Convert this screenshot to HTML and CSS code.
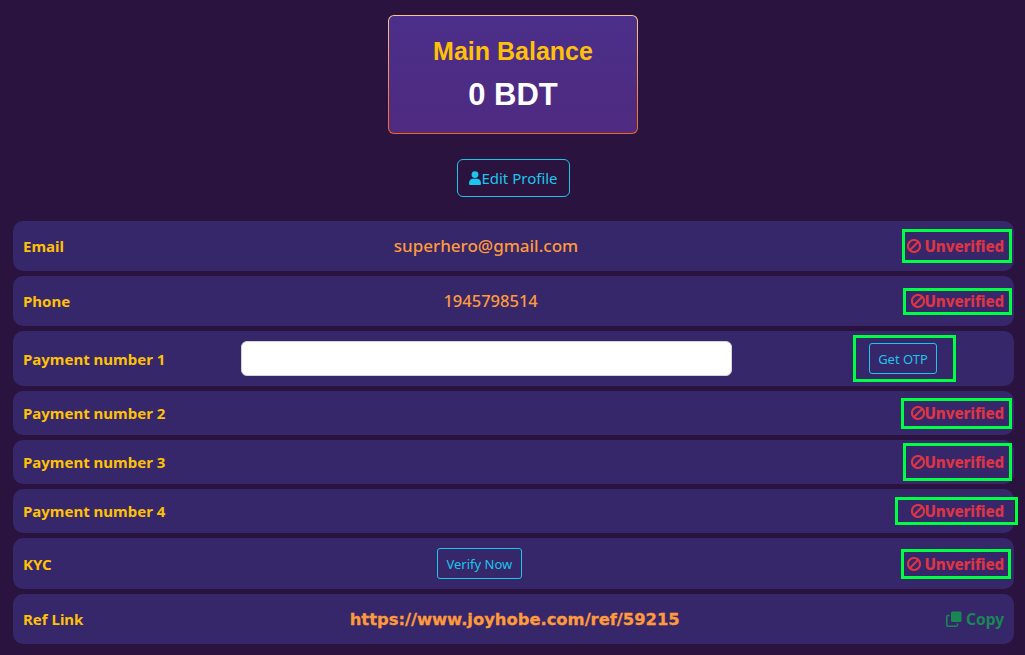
FILE: index.html
```html
<!DOCTYPE html>
<html lang="en">
<head>
<meta charset="utf-8">
<title>Profile</title>
<link rel="stylesheet" href="styles.css">
</head>
<body>
<svg class="defs" width="0" height="0" aria-hidden="true">
  <symbol id="ban" viewBox="0 0 16 16">
    <circle cx="8" cy="8" r="6.9" fill="none" stroke="currentColor" stroke-width="2.4"/>
    <path d="M3.2 12.8 12.8 3.2" fill="none" stroke="currentColor" stroke-width="2.4"/>
  </symbol>
</svg>
<main class="page">
  <section class="balance">
    <h2 class="balance-title">Main Balance</h2>
    <p class="balance-value">0 BDT</p>
  </section>
  <div class="edit-wrap">
    <a class="edit-btn" href="#">
      <svg class="user-icon" viewBox="0 0 12 14"><circle cx="6" cy="3.6" r="3.4" fill="currentColor"/><path d="M0 12.4C0 9.4 2 7.8 3.6 7.8h4.8C10 7.8 12 9.4 12 12.4 12 13.4 11.4 14 10.6 14H1.4C.6 14 0 13.4 0 12.4Z" fill="currentColor"/></svg>Edit Profile
    </a>
  </div>
  <div class="rows">
    <div class="row h50">
      <span class="label">Email</span>
      <span class="value email">superhero@gmail.com</span>
      <span class="status st-email"><svg class="ban"><use href="#ban"/></svg> Unverified</span>
    </div>
    <div class="row h50">
      <span class="label">Phone</span>
      <span class="value phone">1945798514</span>
      <span class="status st-phone"><svg class="ban"><use href="#ban"/></svg>Unverified</span>
    </div>
    <div class="row h55">
      <span class="label">Payment number 1</span>
      <input class="pay-input" type="text">
      <span class="otp-box"><button class="btn-small otp" type="button">Get OTP</button></span>
    </div>
    <div class="row h44">
      <span class="label">Payment number 2</span>
      <span class="status st-p2"><svg class="ban"><use href="#ban"/></svg>Unverified</span>
    </div>
    <div class="row h44">
      <span class="label">Payment number 3</span>
      <span class="status st-p3"><svg class="ban"><use href="#ban"/></svg>Unverified</span>
    </div>
    <div class="row h44">
      <span class="label">Payment number 4</span>
      <span class="status st-p4"><svg class="ban"><use href="#ban"/></svg>Unverified</span>
    </div>
    <div class="row h51">
      <span class="label">KYC</span>
      <button class="btn-small verify" type="button">Verify Now</button>
      <span class="status st-kyc"><svg class="ban"><use href="#ban"/></svg> Unverified</span>
    </div>
    <div class="row h50">
      <span class="label">Ref Link</span>
      <span class="ref">https://www.joyhobe.com/ref/59215</span>
      <span class="copy"><svg class="copy-icon" viewBox="0 0 16 16"><rect x="5" y="0.5" width="10.5" height="10.5" rx="1.6" fill="currentColor"/><path d="M3.5 4.5H2A1.3 1.3 0 0 0 .8 5.8V14A1.3 1.3 0 0 0 2 15.2h8.2a1.3 1.3 0 0 0 1.3-1.2v-1.5" fill="none" stroke="currentColor" stroke-width="1.6"/></svg> Copy</span>
    </div>
  </div>
</main>
</body>
</html>
```
FILE: styles.css
```css
* { box-sizing: border-box; }
html, body { margin: 0; height: 100%; }
body {
  background: #2a133f;
  font-family: "Noto Sans", "Open Sans", sans-serif;
  overflow: hidden;
}
.defs { position: absolute; }
.page { padding: 15px 11px 0 13px; }
.balance {
  width: 250px;
  height: 119px;
  margin-left: 375px;
  border: 1px solid transparent;
  border-radius: 6px;
  background:
    linear-gradient(#4b2f8a, #4f2a80) padding-box,
    linear-gradient(#ffc58c, #f0661a) border-box;
  text-align: center;
  font-family: "Liberation Sans", Arial, sans-serif;
  font-weight: 700;
}
.balance-title {
  margin: 20px 0 0;
  color: #ffc107;
  font-size: 25px;
  line-height: 30px;
}
.balance-value {
  margin: 10px 0 0;
  color: #fff;
  font-size: 31px;
  line-height: 38px;
}
.edit-wrap {
  display: flex;
  justify-content: center;
  margin-top: 25px;
}
.edit-btn {
  display: flex;
  align-items: center;
  height: 38px;
  padding: 0 11px;
  border: 1px solid #1cc6ea;
  border-radius: 6px;
  color: #1cc6ea;
  font-size: 15px;
  text-decoration: none;
}
.user-icon { width: 12px; height: 14px; }
.rows {
  display: flex;
  flex-direction: column;
  gap: 5px;
  margin-top: 24px;
}
.row {
  display: flex;
  align-items: center;
  justify-content: space-between;
  padding: 0 10px;
  border-radius: 10px;
  background: #35276a;
}
.h44 { height: 44px; }
.h50 { height: 50px; }
.h51 { height: 51px; }
.h55 { height: 55px; }
.label {
  color: #ffc107;
  font-size: 15px;
  font-weight: 700;
}
.value {
  color: #ff9a3c;
  font-weight: 500;
  margin-bottom: 2px;
}
.email { font-size: 17px; margin-left: 6px; }
.phone { font-size: 16.5px; margin-left: 8px; }
.ref {
  color: #ff9a3c;
  font-family: "DejaVu Sans", sans-serif;
  font-size: 16.35px;
  font-weight: 700;
  -webkit-text-stroke: 0.3px #ff9a3c;
}
.status {
  display: flex;
  align-items: center;
  justify-content: flex-end;
  padding-right: 5px;
  border: 3px solid #00ff40;
  color: #dc3545;
  font-size: 15.2px;
  font-weight: 800;
  letter-spacing: -0.01em;
  white-space: pre;
  margin-right: -8px;
}
.ban { width: 14px; height: 14px; flex: none; }
.st-email { width: 110px; height: 34px; }
.st-phone { width: 109px; height: 27px; }
.st-p2 { width: 111px; height: 31px; }
.st-p3 { width: 109px; height: 38px; }
.st-p4 { width: 123px; height: 28px; padding-right: 11px; margin-right: -14px; }
.st-kyc { width: 110px; height: 30px; padding-right: 4px; margin-right: -7px; }
.pay-input {
  width: 491px;
  height: 35px;
  margin: 0 auto 0 76px;
  border: 1px solid #ced4da;
  border-radius: 6px;
  background: #fff;
}
.otp-box {
  display: flex;
  align-items: center;
  justify-content: center;
  width: 103px;
  height: 47px;
  margin-right: 48px;
  border: 3px solid #00ff40;
}
.btn-small {
  height: 31px;
  padding: 0 8px;
  border: 1px solid #1cc6ea;
  border-radius: 3px;
  background: transparent;
  color: #1cc6ea;
  font-family: inherit;
  font-size: 13px;
}
.otp { margin-right: 3px; }
.verify { margin-left: 6px; padding: 0 8.5px; }
.copy {
  display: flex;
  align-items: center;
  color: #198754;
  font-size: 15.5px;
  font-weight: 700;
  white-space: pre;
}
.copy-icon { width: 16px; height: 16px; }
```
